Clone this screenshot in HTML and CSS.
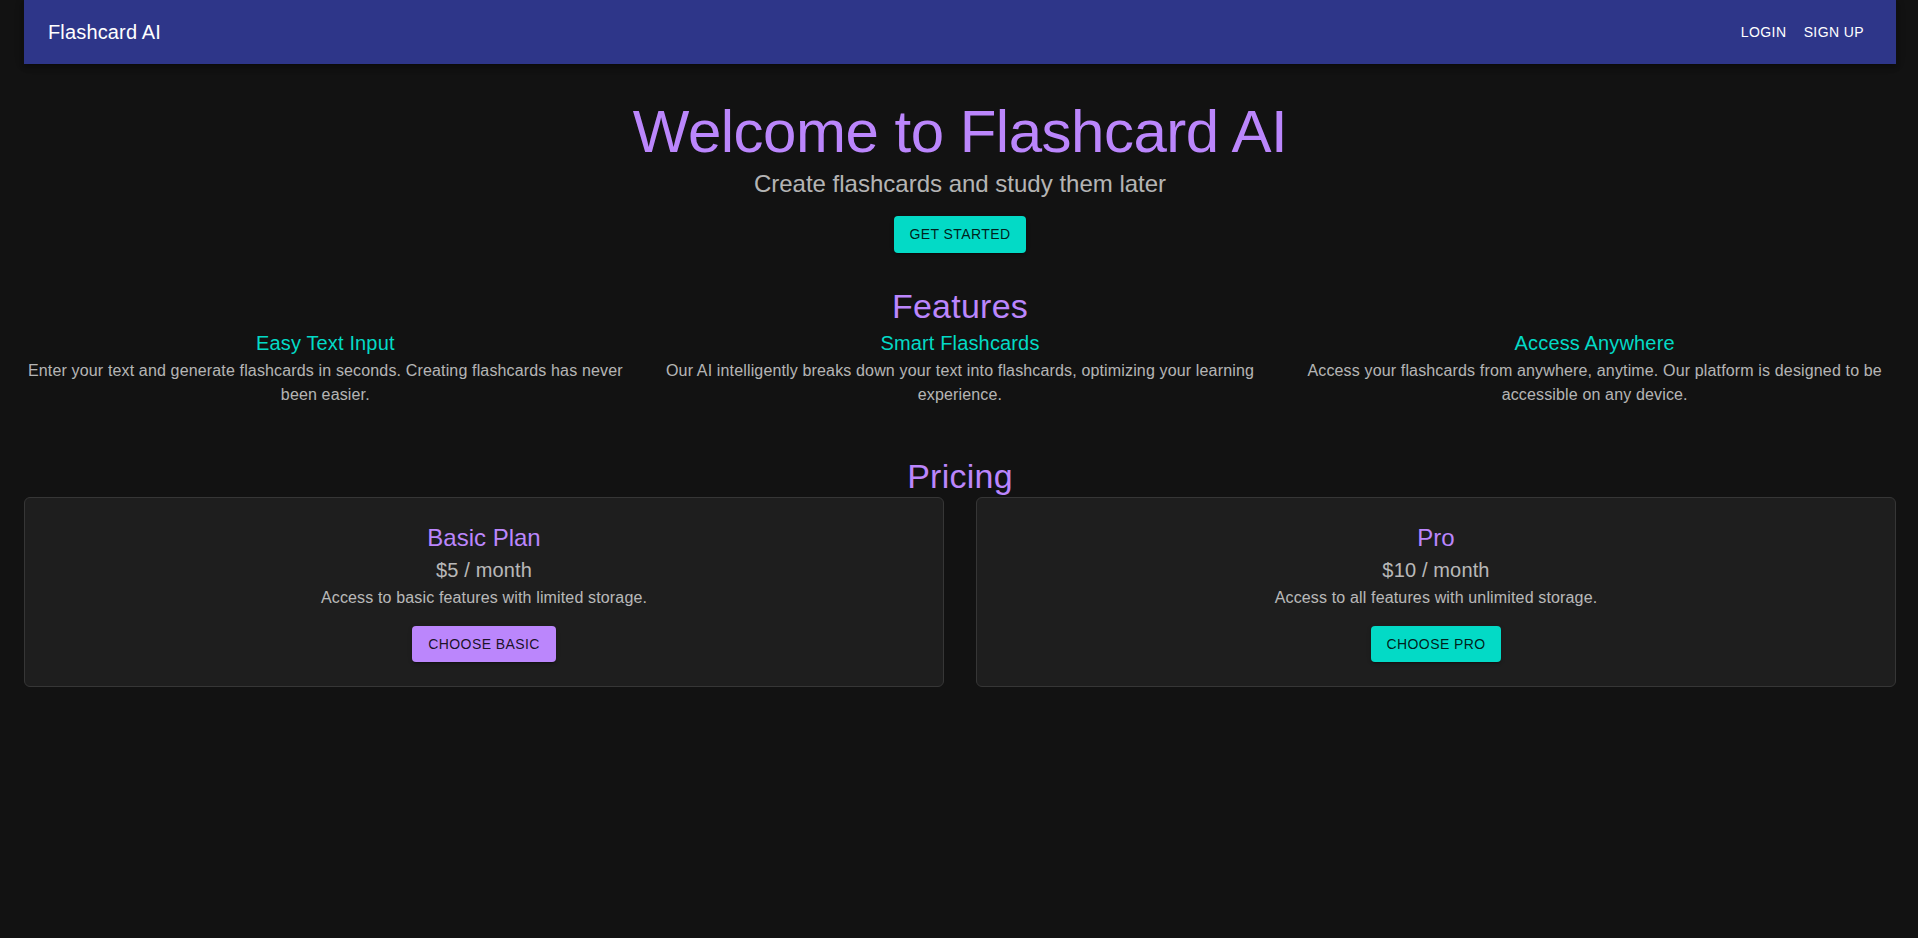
FILE: index.html
```html
<!DOCTYPE html>
<html lang="en">
<head>
<meta charset="utf-8">
<title>Flashcard AI</title>
<link rel="stylesheet" href="styles.css">
</head>
<body>
<div class="container">
  <header class="appbar">
    <div class="toolbar">
      <div class="brand">Flashcard AI</div>
      <nav class="auth">
        <a class="nav-btn" href="#">Login</a>
        <a class="nav-btn" href="#">Sign Up</a>
      </nav>
    </div>
  </header>

  <section class="hero">
    <h1 class="hero-title">Welcome to Flashcard AI</h1>
    <p class="hero-sub">Create flashcards and study them later</p>
    <button class="btn btn-teal hero-btn">Get Started</button>
  </section>

  <section class="features">
    <h2 class="section-title">Features</h2>
    <div class="feature-grid">
      <div class="feature">
        <h3 class="feature-title">Easy Text Input</h3>
        <p class="feature-text">Enter your text and generate flashcards in seconds. Creating flashcards has never been easier.</p>
      </div>
      <div class="feature">
        <h3 class="feature-title">Smart Flashcards</h3>
        <p class="feature-text">Our AI intelligently breaks down your text into flashcards, optimizing your learning experience.</p>
      </div>
      <div class="feature">
        <h3 class="feature-title">Access Anywhere</h3>
        <p class="feature-text">Access your flashcards from anywhere, anytime. Our platform is designed to be accessible on any device.</p>
      </div>
    </div>
  </section>

  <section class="pricing">
    <h2 class="section-title">Pricing</h2>
    <div class="pricing-grid">
      <div class="card">
        <h3 class="card-title">Basic Plan</h3>
        <div class="card-price">$5 / month</div>
        <p class="card-text">Access to basic features with limited storage.</p>
        <button class="btn btn-purple card-btn">Choose Basic</button>
      </div>
      <div class="card">
        <h3 class="card-title">Pro</h3>
        <div class="card-price">$10 / month</div>
        <p class="card-text">Access to all features with unlimited storage.</p>
        <button class="btn btn-teal card-btn">Choose Pro</button>
      </div>
    </div>
  </section>
</div>
</body>
</html>
```

FILE: styles.css
```css
* {
  box-sizing: border-box;
}

html, body {
  margin: 0;
  padding: 0;
  background: #121212;
}

body {
  font-family: "Liberation Sans", Arial, Helvetica, sans-serif;
  color: #ffffff;
  min-height: 938px;
}

.container {
  padding: 0 22px 0 24px;
}

/* App bar */
.appbar {
  background: #2e3689;
  box-shadow: 0 2px 4px -1px rgba(0,0,0,0.2), 0 4px 5px 0 rgba(0,0,0,0.14), 0 1px 10px 0 rgba(0,0,0,0.12);
}

.toolbar {
  height: 64px;
  padding: 0 24px;
  display: flex;
  align-items: center;
}

.brand {
  flex: 1;
  font-size: 20px;
  line-height: 1.6;
  letter-spacing: 0.15px;
  color: #ffffff;
}

.auth {
  display: flex;
}

.nav-btn {
  min-width: 64px;
  padding: 6px 8px;
  font-size: 14px;
  line-height: 1.75;
  letter-spacing: 0.4px;
  text-transform: uppercase;
  text-align: center;
  color: #ffffff;
  text-decoration: none;
}

/* Buttons */
.btn {
  font-family: inherit;
  font-size: 14px;
  line-height: 1.75;
  letter-spacing: 0.4px;
  text-transform: uppercase;
  padding: 6px 16px;
  min-width: 64px;
  border: 0;
  border-radius: 4px;
  color: rgba(0,0,0,0.87);
  cursor: pointer;
  box-shadow: 0 3px 1px -2px rgba(0,0,0,0.2), 0 2px 2px 0 rgba(0,0,0,0.14), 0 1px 5px 0 rgba(0,0,0,0.12);
}

.btn-teal {
  background: #03dac6;
}

.btn-purple {
  background: #bb86fc;
}

/* Hero */
.hero {
  margin: 32px 0;
  text-align: center;
}

.hero-title {
  margin: 0;
  font-size: 60px;
  font-weight: 400;
  line-height: 72px;
  letter-spacing: -0.5px;
  color: #bb86fc;
}

.hero-sub {
  margin: 0;
  font-size: 24px;
  line-height: 32px;
  color: rgba(255,255,255,0.7);
}

.hero-btn {
  margin-top: 16px;
}

/* Section titles */
.section-title {
  margin: 0;
  font-size: 34px;
  font-weight: 400;
  line-height: 42px;
  letter-spacing: 0.25px;
  text-align: center;
  color: #bb86fc;
}

/* Features */
.feature-grid {
  display: grid;
  grid-template-columns: repeat(3, 1fr);
  column-gap: 32px;
}

.feature {
  text-align: center;
}

.feature-title {
  margin: 0;
  font-size: 20px;
  font-weight: 400;
  line-height: 32px;
  letter-spacing: 0.15px;
  color: #03dac6;
}

.feature-text {
  margin: 0;
  font-size: 16px;
  line-height: 24px;
  letter-spacing: 0.15px;
  color: rgba(255,255,255,0.7);
}

/* Pricing */
.pricing {
  margin-top: 48px;
}

.pricing-grid {
  display: grid;
  grid-template-columns: 1fr 1fr;
  column-gap: 32px;
}

.card {
  background: #1e1e1e;
  border: 1px solid #363636;
  border-radius: 6px;
  padding: 24px;
  text-align: center;
}

.card-title {
  margin: 0;
  font-size: 24px;
  font-weight: 400;
  line-height: 32px;
  color: #bb86fc;
}

.card-price {
  font-size: 20px;
  line-height: 32px;
  letter-spacing: 0.15px;
  color: rgba(255,255,255,0.7);
}

.card-text {
  margin: 0;
  font-size: 16px;
  line-height: 24px;
  letter-spacing: 0.15px;
  color: rgba(255,255,255,0.7);
}

.card-btn {
  margin-top: 16px;
}
```
